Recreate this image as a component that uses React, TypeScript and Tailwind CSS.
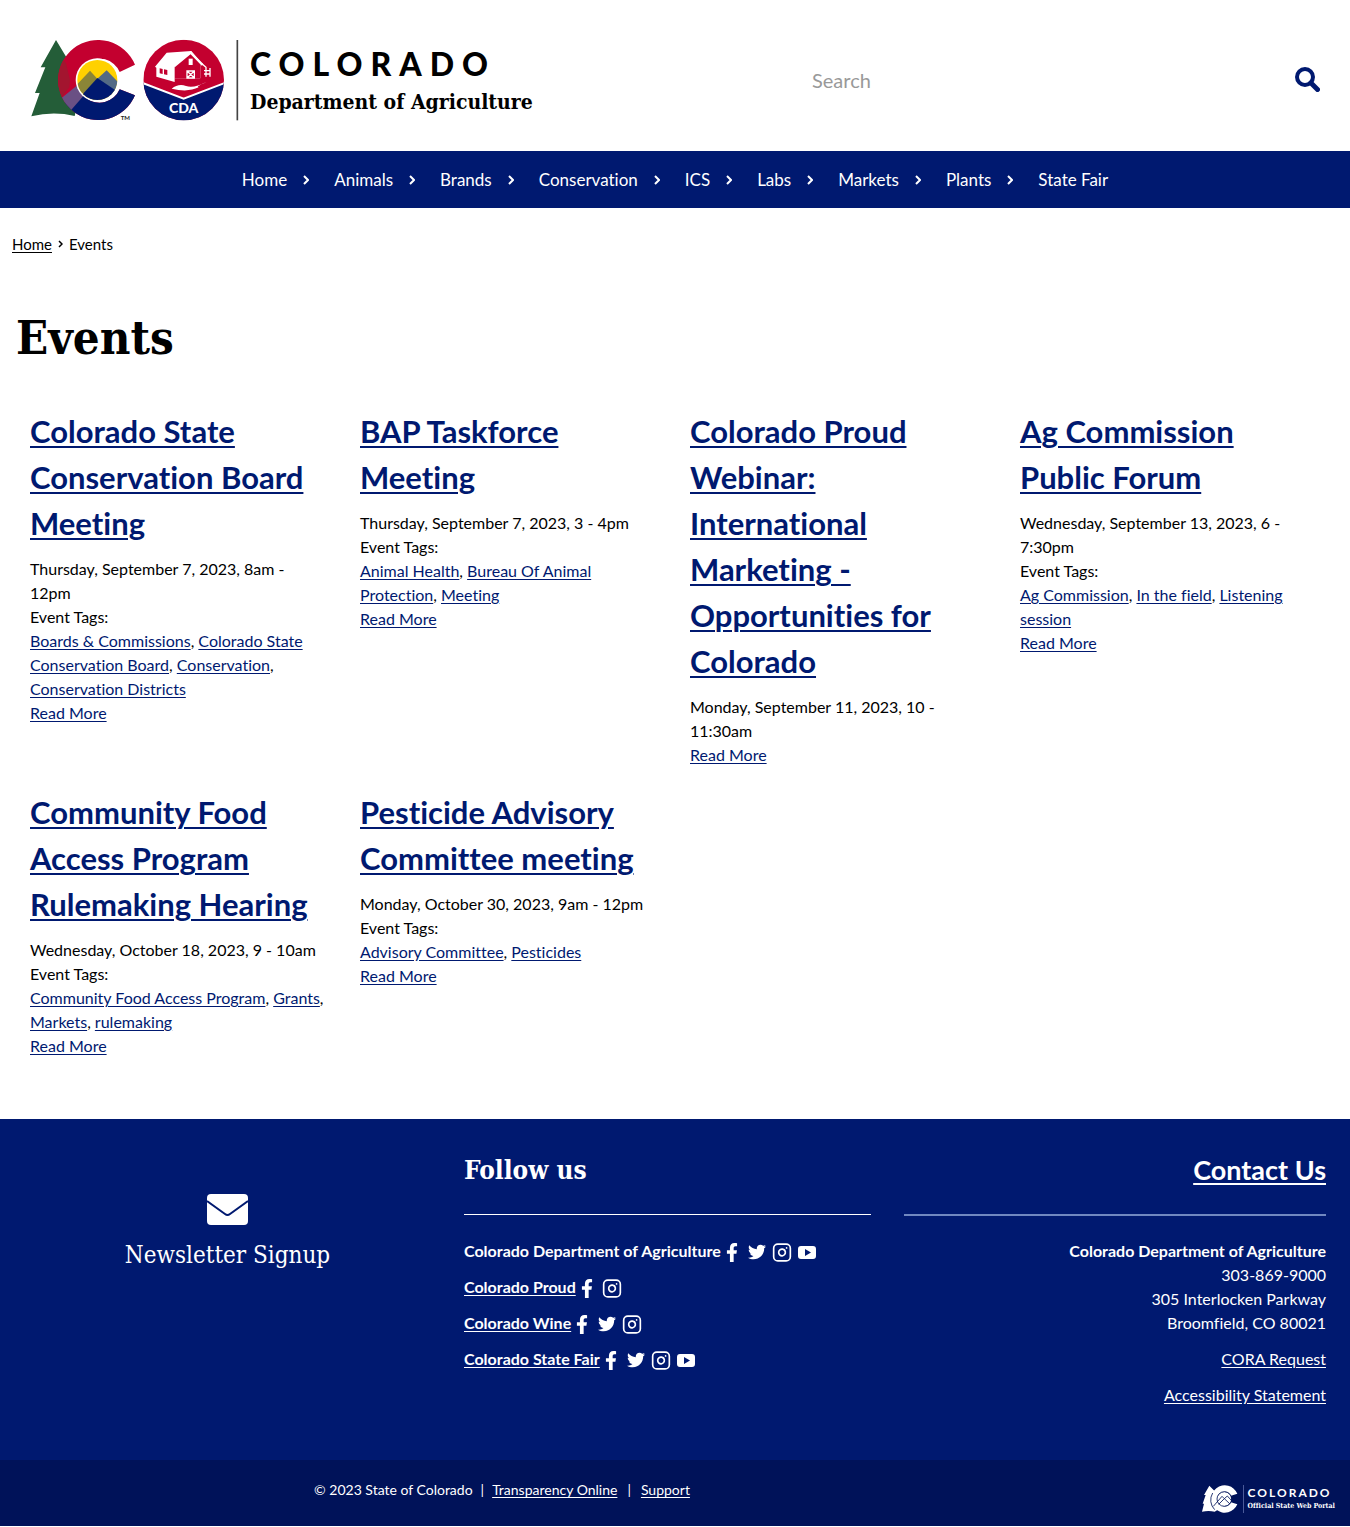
import { Fragment } from "react";
import { FaFacebookF, FaTwitter } from "react-icons/fa";
import { FiInstagram } from "react-icons/fi";

const slab = "font-['DejaVu_Serif_Condensed','DejaVu_Serif',serif]";

const navItems = ["Home", "Animals", "Brands", "Conservation", "ICS", "Labs", "Markets", "Plants", "State Fair"];

type EventInfo = { title: string; when: string; tags: string[] };

const events: EventInfo[] = [
  {
    title: "Colorado State Conservation Board Meeting",
    when: "Thursday, September 7, 2023, 8am - 12pm",
    tags: ["Boards & Commissions", "Colorado State Conservation Board", "Conservation", "Conservation Districts"],
  },
  {
    title: "BAP Taskforce Meeting",
    when: "Thursday, September 7, 2023, 3 - 4pm",
    tags: ["Animal Health", "Bureau Of Animal Protection", "Meeting"],
  },
  {
    title: "Colorado Proud Webinar: International Marketing - Opportunities for Colorado",
    when: "Monday, September 11, 2023, 10 - 11:30am",
    tags: [],
  },
  {
    title: "Ag Commission Public Forum",
    when: "Wednesday, September 13, 2023, 6 - 7:30pm",
    tags: ["Ag Commission", "In the field", "Listening session"],
  },
  {
    title: "Community Food Access Program Rulemaking Hearing",
    when: "Wednesday, October 18, 2023, 9 - 10am",
    tags: ["Community Food Access Program", "Grants", "Markets", "rulemaking"],
  },
  {
    title: "Pesticide Advisory Committee meeting",
    when: "Monday, October 30, 2023, 9am - 12pm",
    tags: ["Advisory Committee", "Pesticides"],
  },
];

type Network = "facebook" | "twitter" | "instagram" | "youtube";

const follow: { name: string; link: boolean; networks: Network[] }[] = [
  { name: "Colorado Department of Agriculture", link: false, networks: ["facebook", "twitter", "instagram", "youtube"] },
  { name: "Colorado Proud", link: true, networks: ["facebook", "instagram"] },
  { name: "Colorado Wine", link: true, networks: ["facebook", "twitter", "instagram"] },
  { name: "Colorado State Fair", link: true, networks: ["facebook", "twitter", "instagram", "youtube"] },
];

function SocialIcon({ network }: { network: Network }) {
  if (network === "facebook") return <FaFacebookF className="h-[19px] w-3" />;
  if (network === "twitter") return <FaTwitter className="size-[18px]" />;
  if (network === "instagram") return <FiInstagram className="size-[21px]" />;
  return (
    <svg viewBox="0 0 18 13" className="h-[13px] w-[18px]" fill="currentColor" fillRule="evenodd">
      <path d="M3 0h12a3 3 0 0 1 3 3v7a3 3 0 0 1-3 3H3a3 3 0 0 1-3-3V3a3 3 0 0 1 3-3Zm4 3v7l6-3.500Z" />
    </svg>
  );
}

function StateLogo() {
  return (
    <svg viewBox="30 24 630 252" className="h-[84px] w-[210px] shrink-0" role="img" aria-label="Colorado Department of Agriculture logo">
      <defs>
        <clipPath id="c-shape">
          <path d="M345 104A120 120 0 1 0 345 196L299 178A66 66 0 1 1 299 126Z" />
        </clipPath>
        <clipPath id="disc">
          <circle cx="232" cy="150" r="60" />
        </clipPath>
        <clipPath id="badge">
          <circle cx="491" cy="150" r="121" />
        </clipPath>
      </defs>
      <path d="M108 30L62 112H76L45 189H59L34 259Q100 243 164 258L190 150L150 100Z" fill="#245d38" />
      <g clipPath="url(#c-shape)">
        <rect x="110" y="25" width="250" height="250" fill="#c3002f" />
        <path d="M130 222L180 168L232 130L360 180V280H130Z" fill="#001970" />
        <path d="M108 60L138 100L150 150L148 172L122 206L108 200Z" fill="#a3152f" />
        <path d="M122 206L172 166L192 196L150 244Z" fill="#6a5084" />
        <path d="M120 212L146 240L156 259L110 255Z" fill="#335566" />
      </g>
      <circle cx="232" cy="150" r="65" fill="#fff" />
      <g clipPath="url(#disc)">
        <rect x="170" y="85" width="125" height="130" fill="#ffd100" />
        <path d="M165 170L210 122L232 146L194 190H165Z" fill="#8b8537" />
        <path d="M232 146L260 121L300 162V200Z" fill="#536a85" />
        <path d="M165 218L232 144L300 190V220H165Z" fill="#001970" />
      </g>
      <text x="302" y="270" className="font-['Lato',sans-serif] text-[18px] font-bold" fill="#222">TM</text>

      <g clipPath="url(#badge)">
        <rect x="370" y="29" width="242" height="242" fill="#c3002f" />
        <path d="M365 156L491 206L617 156V280H365Z" fill="#001970" />
        <path d="M365 158L491 206L617 158" fill="none" stroke="#fff" strokeWidth="6" />
      </g>
      <path d="M405 110L440 68L514 63L540 94L548 103L541 101V145H464V156L409 140V113Z" fill="#fff" />
      <path d="M464 107L512 70L541 101V145H464Z" fill="#c3002f" />
      <path d="M462 109L512 68L548 105" fill="none" stroke="#fff" strokeWidth="7" />
      <path d="M544 100L558 112V140M552 122H572M552 132H572M570 114V140" fill="none" stroke="#fff" strokeWidth="4" />
      <path d="M419 115L428 117V132L419 130ZM432 118L442 120V135L432 133Z" fill="#c3002f" />
      <path d="M506 86H518V105H506Z" fill="#fff" />
      <path d="M501 123H523V144H501ZM501 123L523 144M523 123L501 144" fill="none" stroke="#fff" strokeWidth="4" />
      <path d="M455 176Q475 160 498 168T560 156Q526 170 536 172Q504 188 455 176Z" fill="#fff" />
      <text x="491" y="248" textAnchor="middle" className="font-['Lato',sans-serif] text-[42px] font-black" fill="#fff">CDA</text>
      <path d="M652 30V271" stroke="#444" strokeWidth="5" />
    </svg>
  );
}

function PortalMark() {
  return (
    <svg viewBox="0 0 108 84" className="h-7 w-9" aria-hidden="true">
      <path d="M22 2L6 30H11L2 56H6L0 80Q20 76 38 80L70 60L40 20Z" fill="#fff" />
      <path d="M106 26A41 41 0 1 0 106 58L87 52A22 22 0 1 1 87 32Z" fill="#fff" />
      <circle cx="67" cy="42" r="21" fill="#fff" />
      <path d="M32 24A41 41 0 0 0 38 74M34 64L60 34L67 41L76 33L88 46M50 58L67 41L84 57" fill="none" stroke="#001259" strokeWidth="2.500" />
      <circle cx="67" cy="42" r="22" fill="none" stroke="#001259" strokeWidth="2.500" />
    </svg>
  );
}

function EventCard({ event }: { event: EventInfo }) {
  return (
    <article>
      <h2 className="mb-[11px] text-[31px] leading-[46px] font-bold">
        <a href="#event" className="text-[#001970] underline decoration-2 underline-offset-[3px]">{event.title}</a>
      </h2>
      <p className="pr-2">{event.when}</p>
      {event.tags.length > 0 && (
        <>
          <p>Event Tags:</p>
          <p>
            {event.tags.map((tag, i) => (
              <Fragment key={tag}>
                {i > 0 && ", "}
                <a href="#tag" className="text-[#001970] underline underline-offset-2">{tag}</a>
              </Fragment>
            ))}
          </p>
        </>
      )}
      <p>
        <a href="#more" className="text-[#001970] underline underline-offset-2">Read More</a>
      </p>
    </article>
  );
}

export default function App() {
  return (
    <div className="bg-white font-['Lato',sans-serif] text-base leading-6 text-black [font-variant-ligatures:none]">
      <header className="flex h-[151px] items-center justify-between px-[30px] pt-2">
        <a href="#home" className="flex items-center gap-[10px]">
          <StateLogo />
          <span className="flex flex-col">
            <span className="text-[32px] leading-[44px] font-black tracking-[8px]">COLORADO</span>
            <span className={`text-[21px] leading-8 font-bold ${slab}`}>Department of Agriculture</span>
          </span>
        </a>
        <form className="flex w-[508px] items-center" onSubmit={(e) => e.preventDefault()}>
          <input aria-label="Search" placeholder="Search" className="min-w-0 flex-1 text-[20px] leading-7 outline-none placeholder:text-[#999]" />
          <button aria-label="Submit search" className="text-[#001970]">
            <svg viewBox="0 0 25 25" className="size-[25px]" fill="none" stroke="currentColor">
              <circle cx="10" cy="10" r="8" strokeWidth="4" />
              <path d="M16 16L22.500 22.500" strokeWidth="5" strokeLinecap="round" />
            </svg>
          </button>
        </form>
      </header>

      <nav className="flex h-[57px] items-center justify-center bg-[#001970] text-[17px] text-white">
        {navItems.map((item, i) => (
          <div key={item} className="flex items-center">
            <a href="#section">{item}</a>
            {i < navItems.length - 1 && (
              <span className="flex w-[47px] pl-4">
                <svg viewBox="0 0 6 10" className="h-[10px] w-[6px]" fill="none" stroke="currentColor" strokeWidth="2">
                  <path d="M1 1L5 5L1 9" />
                </svg>
              </span>
            )}
          </div>
        ))}
      </nav>

      <main>
        <div className="flex items-center px-3 pt-6 text-[15px]">
          <a href="#home" className="underline underline-offset-2">Home</a>
          <svg viewBox="0 0 5 8" className="mx-[6px] h-2 w-[5px]" fill="none" stroke="currentColor" strokeWidth="1.500">
            <path d="M1 1L4 4L1 7" />
          </svg>
          <span>Events</span>
        </div>
        <h1 className={`px-4 pt-[50px] text-[47px] leading-[64px] font-bold ${slab}`}>Events</h1>
        <div className="grid grid-cols-4 gap-x-[30px] gap-y-[22px] px-[30px] pt-[38px] pb-[61px]">
          {events.map((event) => (
            <EventCard key={event.title} event={event} />
          ))}
        </div>
      </main>

      <footer className="bg-[#001970] text-white">
        <div className="grid grid-cols-[407fr_407fr_422fr] gap-x-[33px] px-6 pt-8 pb-[53px]">
          <a href="#newsletter" className="mt-[43px] flex flex-col items-center gap-4">
            <svg viewBox="0 0 41 31" className="h-[31px] w-[41px]">
              <rect width="41" height="31" rx="4" fill="currentColor" />
              <path d="M0 7L18 20Q20.500 22 23 20L41 7" fill="none" stroke="#001970" strokeWidth="2" />
            </svg>
            <span className={`text-[24px] leading-7 ${slab}`}>Newsletter Signup</span>
          </a>
          <section>
            <h2 className={`text-[26px] leading-[38px] font-bold ${slab}`}>Follow us</h2>
            <hr className="mt-[25px] mb-6 border-white" />
            <ul className="flex flex-col gap-3">
              {follow.map((row) => (
                <li key={row.name} className="flex items-center font-bold">
                  {row.link ? <a href="#profile" className="underline underline-offset-2">{row.name}</a> : <span>{row.name}</span>}
                  <span className="mt-[2px] ml-1 flex items-center gap-[5px]">
                    {row.networks.map((network) => (
                      <a key={network} href="#social" aria-label={network} className="flex h-5 w-5 items-center justify-center first:mr-[3px] first:w-[14px]">
                        <SocialIcon network={network} />
                      </a>
                    ))}
                  </span>
                </li>
              ))}
            </ul>
          </section>
          <section className="text-right">
            <h2 className="text-[27px] leading-[38px] font-bold">
              <a href="#contact" className="underline decoration-2 underline-offset-[3px]">Contact Us</a>
            </h2>
            <hr className="mt-[25px] mb-[23px] border-t-2 border-[#7088c0]" />
            <address className="not-italic">
              <strong>Colorado Department of Agriculture</strong>
              <br />
              303-869-9000
              <br />
              305 Interlocken Parkway
              <br />
              Broomfield, CO 80021
            </address>
            <p className="mt-3"><a href="#cora" className="underline underline-offset-2">CORA Request</a></p>
            <p className="mt-3"><a href="#accessibility" className="underline underline-offset-2">Accessibility Statement</a></p>
          </section>
        </div>
        <div className="flex h-[66px] items-center bg-[#001259] pr-[15px]">
          <div className="flex flex-1 justify-center pb-[6px] text-[14px]">
            <span>© 2023 State of Colorado</span>
            <span className="mx-2">|</span>
            <a href="#transparency" className="underline underline-offset-2">Transparency Online</a>
            <span className="mx-[10px]">|</span>
            <a href="#support" className="underline underline-offset-2">Support</a>
          </div>
          <div className="flex w-[331px] justify-end">
            <a href="#portal" className="mt-3 flex items-center">
              <PortalMark />
              <span className="ml-[5px] flex h-7 flex-col justify-center border-l border-[#4a5a99] pl-1">
                <span className="text-[12px] leading-[14px] font-bold tracking-[2px]">COLORADO</span>
                <span className={`text-[7px] leading-3 font-bold ${slab}`}>Official State Web Portal</span>
              </span>
            </a>
          </div>
        </div>
      </footer>
    </div>
  );
}
